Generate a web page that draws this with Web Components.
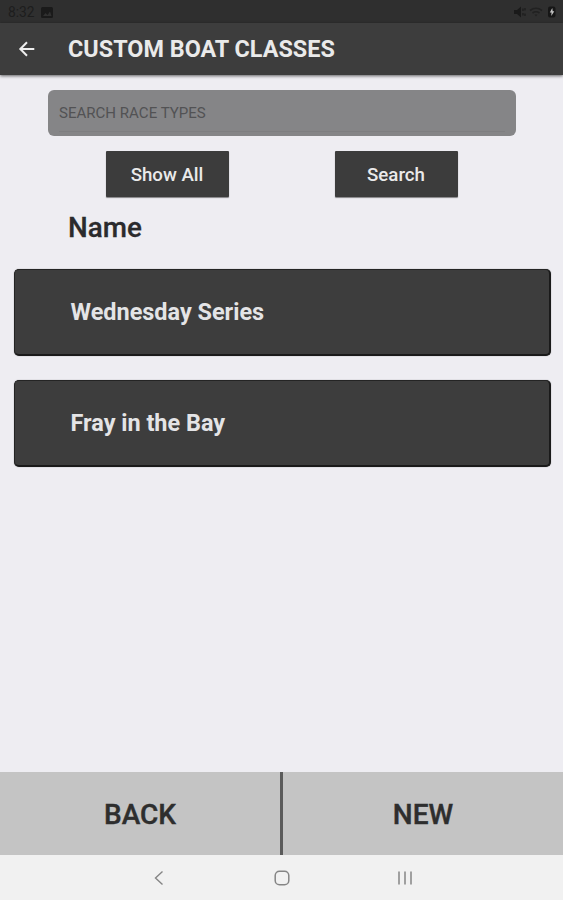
<!DOCTYPE html>
<html lang="en">
<head>
<meta charset="utf-8">
<title>Custom Boat Classes</title>
<style>
  body {
    margin: 0;
    font-family: Roboto, "Liberation Sans", sans-serif;
    background: #eeedf2;
  }
</style>
</head>
<body>

<boat-app>
  <status-bar slot="top" time="8:32"></status-bar>
  <title-bar slot="top">CUSTOM BOAT CLASSES</title-bar>
  <search-box placeholder="SEARCH RACE TYPES"></search-box>
  <button-row>
    <app-button>Show All</app-button>
    <app-button>Search</app-button>
  </button-row>
  <list-heading>Name</list-heading>
  <race-card>Wednesday Series</race-card>
  <race-card>Fray in the Bay</race-card>
  <bottom-bar slot="bottom">
    <span slot="left">BACK</span>
    <span slot="right">NEW</span>
  </bottom-bar>
  <nav-bar slot="bottom"></nav-bar>
</boat-app>

<script>
/** Attach an open shadow root and fill it with the given markup */
class BaseElement extends HTMLElement {
  constructor() {
    super();
    const template = document.createElement('template');
    template.innerHTML = this.constructor.html;
    this._shadowRoot = this.attachShadow({ mode: 'open' });
    this._shadowRoot.appendChild(template.content.cloneNode(true));
  }
}

class BoatApp extends BaseElement {
  static html = `
    <style>
      :host {
        display: flex;
        flex-direction: column;
        height: 100vh;
        overflow: hidden;
      }
      main {
        flex: 1;
        min-height: 0;
        display: flex;
        flex-direction: column;
      }
    </style>
    <slot name="top"></slot>
    <main><slot></slot></main>
    <slot name="bottom"></slot>
  `;
}

class StatusBar extends BaseElement {
  static html = `
    <style>
      :host {
        display: flex;
        align-items: center;
        box-sizing: border-box;
        height: 23px;
        padding: 1px 6px 0 8px;
        background: #2f2f2f;
        color: #1d1d1d;
        font-size: 13.8px;
      }
      svg { display: block; }
      #picture { margin-left: 6px; }
      #icons { display: flex; align-items: center; margin-left: auto; }
    </style>
    <span id="time"></span>
    <svg id="picture" width="12" height="11" viewBox="0 0 12 11">
      <rect width="12" height="11" rx="1.5" fill="#1a1a1a"/>
      <path d="M2 9l2.5-3 2 2L9 4.500l1.500 4.500z" fill="#303030"/>
    </svg>
    <div id="icons">
      <svg width="44" height="14" viewBox="0 0 44 14">
        <path d="M1 5h3l4-3.500v11L4 9H1z" fill="#1a1a1a"/>
        <path d="M10 3.500v2.500M10 8v2.500M12 3v2.500M12 8.500v2.500" stroke="#1c1c1c" stroke-width="1.200"/>
        <path d="M17 5.500q6-4.500 12 0M19.500 8q3.500-2.500 7 0" fill="none" stroke="#212121" stroke-width="1.600"/>
        <path d="M21.500 9.500h3L23 11.500z" fill="#212121"/>
        <rect x="35" y="1.500" width="7.500" height="11" rx="2" fill="#161616"/>
        <path d="M39.300 3L36.800 7.500h1.700L38.300 11l3-4.800h-1.600z" fill="#c4c4c4"/>
      </svg>
    </div>
  `;

  connectedCallback() {
    this._shadowRoot.querySelector('#time').textContent = this.getAttribute('time');
  }
}

class TitleBar extends BaseElement {
  static html = `
    <style>
      :host {
        display: flex;
        align-items: center;
        box-sizing: border-box;
        height: 52px;
        padding-left: 18px;
        background: #3d3d3d;
        color: #eaeaea;
        font-size: 23.4px;
        font-weight: 700;
        box-shadow: 0 1px 3px rgba(0,0,0,.6);
        white-space: nowrap;
      }
      svg { display: block; margin-right: 32px; }
    </style>
    <svg width="18" height="18" viewBox="0 0 18 18" fill="none" stroke="#eeeeee" stroke-width="2">
      <path d="M16.300 9H2.800M9 2.300L2.300 9L9 15.700"/>
    </svg>
    <slot></slot>
  `;
}

class SearchBox extends BaseElement {
  static html = `
    <style>
      :host {
        display: flex;
        box-sizing: border-box;
        height: 46px;
        margin: 15px 47px 0 48px;
        padding: 0 11px;
        border-radius: 6px;
        background: #858587;
      }
      #field {
        flex: 1;
        height: 41px;
        line-height: 46px;
        border-bottom: 1px solid #7e7e80;
        font-size: 15.050px;
        color: #525254;
      }
    </style>
    <div id="field"></div>
  `;

  connectedCallback() {
    this._shadowRoot.querySelector('#field').textContent = this.getAttribute('placeholder');
  }
}

class ButtonRow extends BaseElement {
  static html = `
    <style>
      :host {
        display: flex;
        justify-content: space-between;
        margin: 15px 105px 0 106px;
      }
    </style>
    <slot></slot>
  `;
}

class AppButton extends BaseElement {
  static html = `
    <style>
      :host {
        display: flex;
        align-items: center;
        justify-content: center;
        box-sizing: border-box;
        width: 123px;
        height: 46px;
        padding: 1px 1px 0 0;
        border-radius: 1px;
        background: #3c3c3c;
        color: #eaeaea;
        font-size: 18.7px;
        font-weight: 500;
        box-shadow: 0 1px 1px rgba(0,0,0,.45);
      }
    </style>
    <slot></slot>
  `;
}

class ListHeading extends BaseElement {
  static html = `
    <style>
      :host {
        display: block;
        height: 72px;
        padding-left: 68px;
        line-height: 61px;
        font-size: 27.8px;
        font-weight: 500;
        color: #2b2b2d;
        -webkit-text-stroke: 0.3px #2b2b2d;
      }
    </style>
    <slot></slot>
  `;
}

class RaceCard extends BaseElement {
  static html = `
    <style>
      :host {
        display: flex;
        align-items: center;
        box-sizing: border-box;
        height: 87px;
        margin: 0 12px 24px 14px;
        padding-left: 55.5px;
        border: 1px solid #242424;
        border-right: 2px solid #1a1a1a;
        border-bottom: 2px solid #1a1a1a;
        border-radius: 5px;
        background: #3d3d3d;
        color: #e4e4e6;
        font-size: 23.450px;
        font-weight: 700;
        box-shadow: 0 0 1px rgba(0,0,0,.5);
      }
    </style>
    <slot></slot>
  `;
}

class BottomBar extends BaseElement {
  static html = `
    <style>
      :host {
        display: flex;
        height: 83px;
        background: #c4c4c4;
        color: #2e2e2e;
        font-size: 28px;
        font-weight: 500;
        -webkit-text-stroke: 0.400px #2e2e2e;
      }
      div {
        flex: 1;
        display: flex;
        align-items: center;
        justify-content: center;
        padding-top: 1px;
      }
      #divider { flex: none; width: 3px; padding: 0; background: #5b5b5b; }
    </style>
    <div><slot name="left"></slot></div>
    <div id="divider"></div>
    <div><slot name="right"></slot></div>
  `;
}

class NavBar extends BaseElement {
  static html = `
    <style>
      :host {
        display: flex;
        align-items: center;
        justify-content: center;
        height: 45px;
        gap: 107px;
        background: #f1f1f1;
      }
      svg { display: block; }
    </style>
    <svg width="16" height="16" viewBox="0 0 16 16" fill="none" stroke="#858585" stroke-width="1.400">
      <path d="M11.500 1.500L4.500 8L11.500 14.500"/>
    </svg>
    <svg width="16" height="16" viewBox="0 0 16 16" fill="none" stroke="#858585" stroke-width="1.500">
      <rect x="1.200" y="1.200" width="13.600" height="13.600" rx="4.300"/>
    </svg>
    <svg width="16" height="16" viewBox="0 0 16 16" fill="none" stroke="#858585" stroke-width="1.500">
      <path d="M2 1.500V14.500M8 1.500V14.500M14 1.500V14.500"/>
    </svg>
  `;
}

window.customElements.define('boat-app', BoatApp);
window.customElements.define('status-bar', StatusBar);
window.customElements.define('title-bar', TitleBar);
window.customElements.define('search-box', SearchBox);
window.customElements.define('button-row', ButtonRow);
window.customElements.define('app-button', AppButton);
window.customElements.define('list-heading', ListHeading);
window.customElements.define('race-card', RaceCard);
window.customElements.define('bottom-bar', BottomBar);
window.customElements.define('nav-bar', NavBar);
</script>
</body>
</html>
